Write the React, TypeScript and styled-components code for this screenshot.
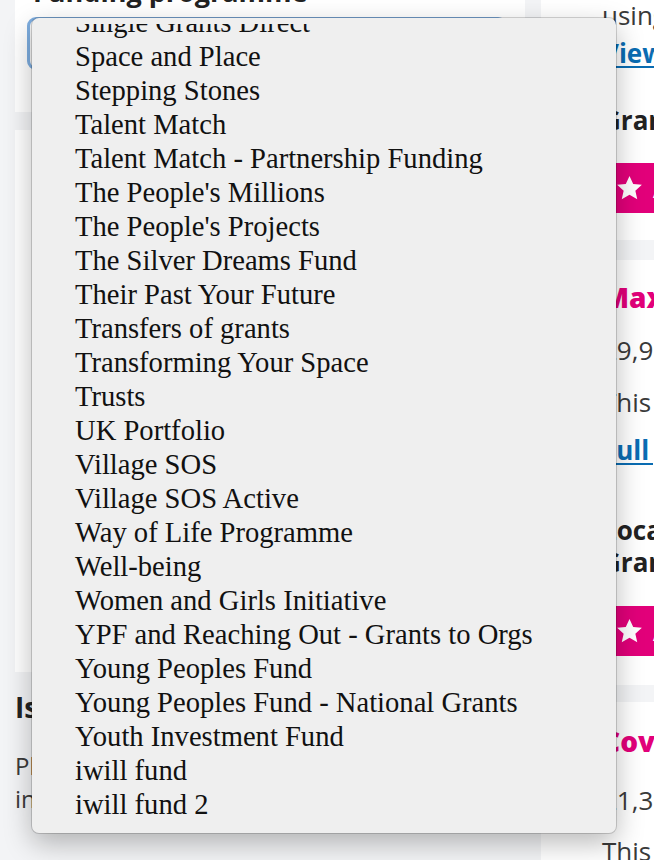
import React from "react";
import styled, { createGlobalStyle } from "styled-components";

const GlobalStyle = createGlobalStyle`
  html, body {
    margin: 0;
    padding: 0;
    background: #f3f4f6;
  }
  body {
    font-family: "Open Sans", "Liberation Sans", sans-serif;
    color: #2b2b2b;
  }
`;

const Screen = styled.div`
  position: relative;
  width: 654px;
  height: 860px;
  overflow: hidden;
  background: #f3f4f6;
`;

const Columns = styled.div`
  display: flex;
  gap: 16px;
  padding-left: 15px;
`;

const LeftColumn = styled.div`
  width: 510px;
  flex-shrink: 0;
  display: flex;
  flex-direction: column;
`;

const RightColumn = styled.div`
  width: 420px;
  flex-shrink: 0;
  display: flex;
  flex-direction: column;
`;

const Card = styled.div<{ $height?: number; $pt?: number; $pb?: number; $mt?: number }>`
  background: #ffffff;
  box-sizing: border-box;
  margin-top: ${p => p.$mt ?? 0}px;
  padding-top: ${p => p.$pt ?? 0}px;
  padding-bottom: ${p => p.$pb ?? 0}px;
  ${p => (p.$height ? `height: ${p.$height}px;` : "")}
`;

const FilterCard = styled(Card)`
  padding-left: 12px;
  padding-right: 12px;
`;

const FieldLabel = styled.div`
  margin-top: -22px;
  padding-left: 6px;
  font-size: 27px;
  line-height: 27px;
  font-weight: 700;
  color: #222;
  white-space: nowrap;
`;

const SelectBox = styled.div`
  margin-top: 12px;
  width: 480px;
  height: 53px;
  box-sizing: border-box;
  border-radius: 9px;
  border: 3px solid #7eaee0;
  background: #f7f7f7;
`;

const Heading = styled.h2<{ $mt: number }>`
  margin: ${p => p.$mt}px 0 0;
  font-size: 28px;
  line-height: 34px;
  font-weight: 700;
  color: #222;
  white-space: nowrap;
`;

const Paragraph = styled.p<{ $mt: number }>`
  margin: ${p => p.$mt}px 0 0;
  font-size: 24px;
  line-height: 33px;
  color: #3a3a3a;
  white-space: nowrap;
`;

const ResultCard = styled(Card)`
  padding-left: 61px;
`;

const Line = styled.div<{ $mt: number; $bold?: boolean }>`
  margin-top: ${p => p.$mt}px;
  font-size: 26px;
  line-height: 32px;
  font-weight: ${p => (p.$bold ? 700 : 400)};
  color: ${p => (p.$bold ? "#222" : "#3a3a3a")};
  white-space: nowrap;
`;

const Link = styled.a<{ $mt: number }>`
  display: block;
  margin-top: ${p => p.$mt}px;
  font-size: 26px;
  line-height: 32px;
  font-weight: 700;
  color: #0a6cb2;
  text-decoration: underline;
  text-underline-offset: 3px;
  white-space: nowrap;
`;

const Title = styled.div<{ $mt: number }>`
  margin-top: ${p => p.$mt}px;
  font-size: 28px;
  line-height: 32px;
  font-weight: 800;
  color: #e2007a;
  white-space: nowrap;
`;

const ShortlistButton = styled.button<{ $mt: number }>`
  margin-top: ${p => p.$mt}px;
  height: 50px;
  width: max-content;
  display: flex;
  align-items: center;
  gap: 10px;
  padding: 0 18px 0 14px;
  border: none;
  background: #e2007a;
  color: #ffffff;
  font-family: "Open Sans", "Liberation Sans", sans-serif;
  font-size: 26px;
  font-weight: 700;
  white-space: nowrap;
`;

const StarIcon = styled.svg`
  width: 27px;
  height: 26px;
  flex-shrink: 0;
`;

const Menu = styled.div`
  position: absolute;
  top: 18px;
  left: 32px;
  width: 584px;
  height: 815px;
  box-sizing: border-box;
  padding: 6px 0 11px;
  background: #efefef;
  border-radius: 7px;
  box-shadow: 0 0 0 1px rgba(0, 0, 0, 0.16), 0 10px 28px rgba(0, 0, 0, 0.28);
`;

const MenuViewport = styled.div`
  height: 798px;
  overflow: hidden;
`;

const MenuList = styled.ul`
  margin: -18px 0 0;
  padding: 0;
  list-style: none;
`;

const MenuItem = styled.li`
  height: 34px;
  line-height: 34px;
  padding-left: 43px;
  font-family: "Liberation Serif", "Times New Roman", serif;
  font-size: 28.6px;
  color: #111;
  white-space: nowrap;
`;

const programmes = [
  "Single Grants Direct",
  "Space and Place",
  "Stepping Stones",
  "Talent Match",
  "Talent Match - Partnership Funding",
  "The People's Millions",
  "The People's Projects",
  "The Silver Dreams Fund",
  "Their Past Your Future",
  "Transfers of grants",
  "Transforming Your Space",
  "Trusts",
  "UK Portfolio",
  "Village SOS",
  "Village SOS Active",
  "Way of Life Programme",
  "Well-being",
  "Women and Girls Initiative",
  "YPF and Reaching Out - Grants to Orgs",
  "Young Peoples Fund",
  "Young Peoples Fund - National Grants",
  "Youth Investment Fund",
  "iwill fund",
  "iwill fund 2",
];

const Star = () => (
  <StarIcon viewBox="0 0 24 23">
    <path
      d="M12 0.8l3.3 7.1 7.7 0.8-5.8 5.2 1.7 7.6L12 17.6l-6.9 3.9 1.7-7.6L1 8.7l7.7-0.8z"
      fill="#ffffff"
    />
  </StarIcon>
);

const App = () => {
  return (
    <>
      <GlobalStyle />
      <Screen>
        <Columns>
          <LeftColumn>
            <FilterCard $pb={42}>
              <FieldLabel>Funding programme</FieldLabel>
              <SelectBox />
            </FilterCard>
            <Card $mt={18} $height={542} />
            <Heading $mt={18}>Is this the right funding for you?</Heading>
            <Paragraph $mt={25}>
              Please check your project meets our criteria
              <br />
              in full before you start an application.
            </Paragraph>
          </LeftColumn>

          <RightColumn>
            <ResultCard $pb={27}>
              <Line $mt={-1}>using the National Lottery</Line>
              <Link $mt={6}>View full details</Link>
              <Line $mt={35} $bold>Grant programme</Line>
              <ShortlistButton $mt={27}>
                <Star />
                Add to shortlist
              </ShortlistButton>
            </ResultCard>

            <ResultCard $mt={20} $pt={21} $pb={29}>
              <Title $mt={0}>Maximum Impact</Title>
              <Line $mt={21}>£9,950</Line>
              <Line $mt={20}>This grant helped a local group</Line>
              <Link $mt={16}>Full grant details</Link>
              <Line $mt={48} $bold>Local authority</Line>
              <Line $mt={0} $bold>Grant programme</Line>
              <ShortlistButton $mt={28}>
                <Star />
                Add to shortlist
              </ShortlistButton>
            </ResultCard>

            <ResultCard $mt={17} $pt={23} $pb={30}>
              <Title $mt={0}>Coventry Youth Project</Title>
              <Line $mt={27}>£1,350</Line>
              <Line $mt={19}>This grant helped a local group</Line>
            </ResultCard>
          </RightColumn>
        </Columns>

        <Menu>
          <MenuViewport>
            <MenuList>
              {programmes.map(name => (
                <MenuItem key={name}>{name}</MenuItem>
              ))}
            </MenuList>
          </MenuViewport>
        </Menu>
      </Screen>
    </>
  );
};

export default App;
